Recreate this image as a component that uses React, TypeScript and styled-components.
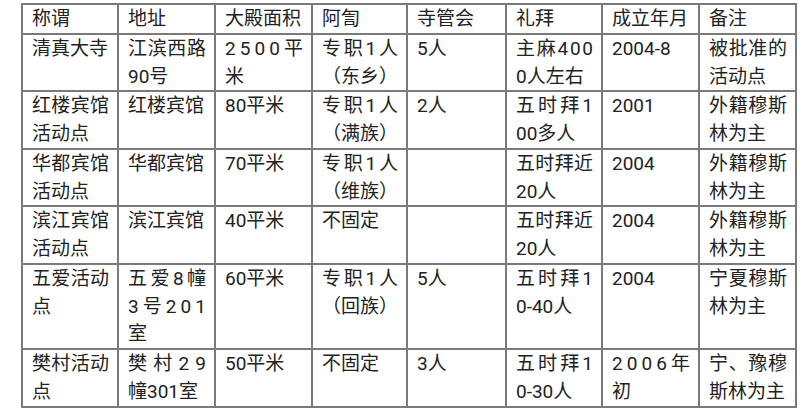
import React from 'react';
import styled, { createGlobalStyle } from 'styled-components';

const GlobalStyle = createGlobalStyle`
  html, body {
    margin: 0;
    padding: 0;
    background: #ffffff;
  }
  body {
    font-family: Roboto, "Noto Sans CJK SC", sans-serif;
    color: #222222;
  }
`;

const Page = styled.div`
  padding: 3px 0 0 21px;
`;

const Table = styled.table`
  border-collapse: collapse;
  table-layout: fixed;
  width: 776px;
`;

const Col = styled.col<{ $w: number }>`
  width: ${p => p.$w}px;
`;

const Cell = styled.td`
  border: 2px solid #7a7a7a;
  padding: 0 8px 0 9px;
  vertical-align: top;
  font-size: 19px;
  line-height: 27.75px;
  color: #222222;
  overflow: hidden;
`;

const HeadCell = styled(Cell).attrs({ as: 'th' })`
  font-weight: 400;
  text-align: left;
`;

const Line = styled.span`
  display: block;
  white-space: nowrap;
`;

// lines before a wrap are spread over the cell, like justified CJK text
const JustifiedLine = styled.span`
  display: flex;
  justify-content: space-between;
  white-space: nowrap;
`;

const widths = [96, 97, 97, 95, 99, 96, 97, 97];

const header = ['称谓', '地址', '大殿面积', '阿訇', '寺管会', '礼拜', '成立年月', '备注'];

// "|" marks where the cell text wraps
const rows: string[][] = [
  ['清真大寺', '江滨西路|90号', '2500平|米', '专职1人|（东乡）', '5人', '主麻400|0人左右', '2004-8', '被批准的|活动点'],
  ['红楼宾馆|活动点', '红楼宾馆', '80平米', '专职1人|（满族）', '2人', '五时拜1|00多人', '2001', '外籍穆斯|林为主'],
  ['华都宾馆|活动点', '华都宾馆', '70平米', '专职1人|（维族）', '', '五时拜近|20人', '2004', '外籍穆斯|林为主'],
  ['滨江宾馆|活动点', '滨江宾馆', '40平米', '不固定', '', '五时拜近|20人', '2004', '外籍穆斯|林为主'],
  ['五爱活动|点', '五爱8幢|3号201|室', '60平米', '专职1人|（回族）', '5人', '五时拜1|0-40人', '2004', '宁夏穆斯|林为主'],
  ['樊村活动|点', '樊村29|幢301室', '50平米', '不固定', '3人', '五时拜1|0-30人', '2006年|初', '宁、豫穆|斯林为主'],
];

const CellText = ({ text }: { text: string }) => {
  const lines = text.split('|');
  return (
    <>
      {lines.map((line, i) =>
        i < lines.length - 1 ? (
          <JustifiedLine key={i}>
            {Array.from(line).map((ch, j) => (
              <span key={j}>{ch}</span>
            ))}
          </JustifiedLine>
        ) : (
          <Line key={i}>{line || '\u00a0'}</Line>
        )
      )}
    </>
  );
};

const App = () => {
  return (
    <Page>
      <GlobalStyle />
      <Table>
        <colgroup>
          {widths.map((w, i) => (
            <Col key={i} $w={w} />
          ))}
        </colgroup>
        <thead>
          <tr>
            {header.map(h => (
              <HeadCell key={h}>
                <Line>{h}</Line>
              </HeadCell>
            ))}
          </tr>
        </thead>
        <tbody>
          {rows.map((row, r) => (
            <tr key={r}>
              {row.map((cell, c) => (
                <Cell key={c}>
                  <CellText text={cell} />
                </Cell>
              ))}
            </tr>
          ))}
        </tbody>
      </Table>
    </Page>
  );
};

export default App;
